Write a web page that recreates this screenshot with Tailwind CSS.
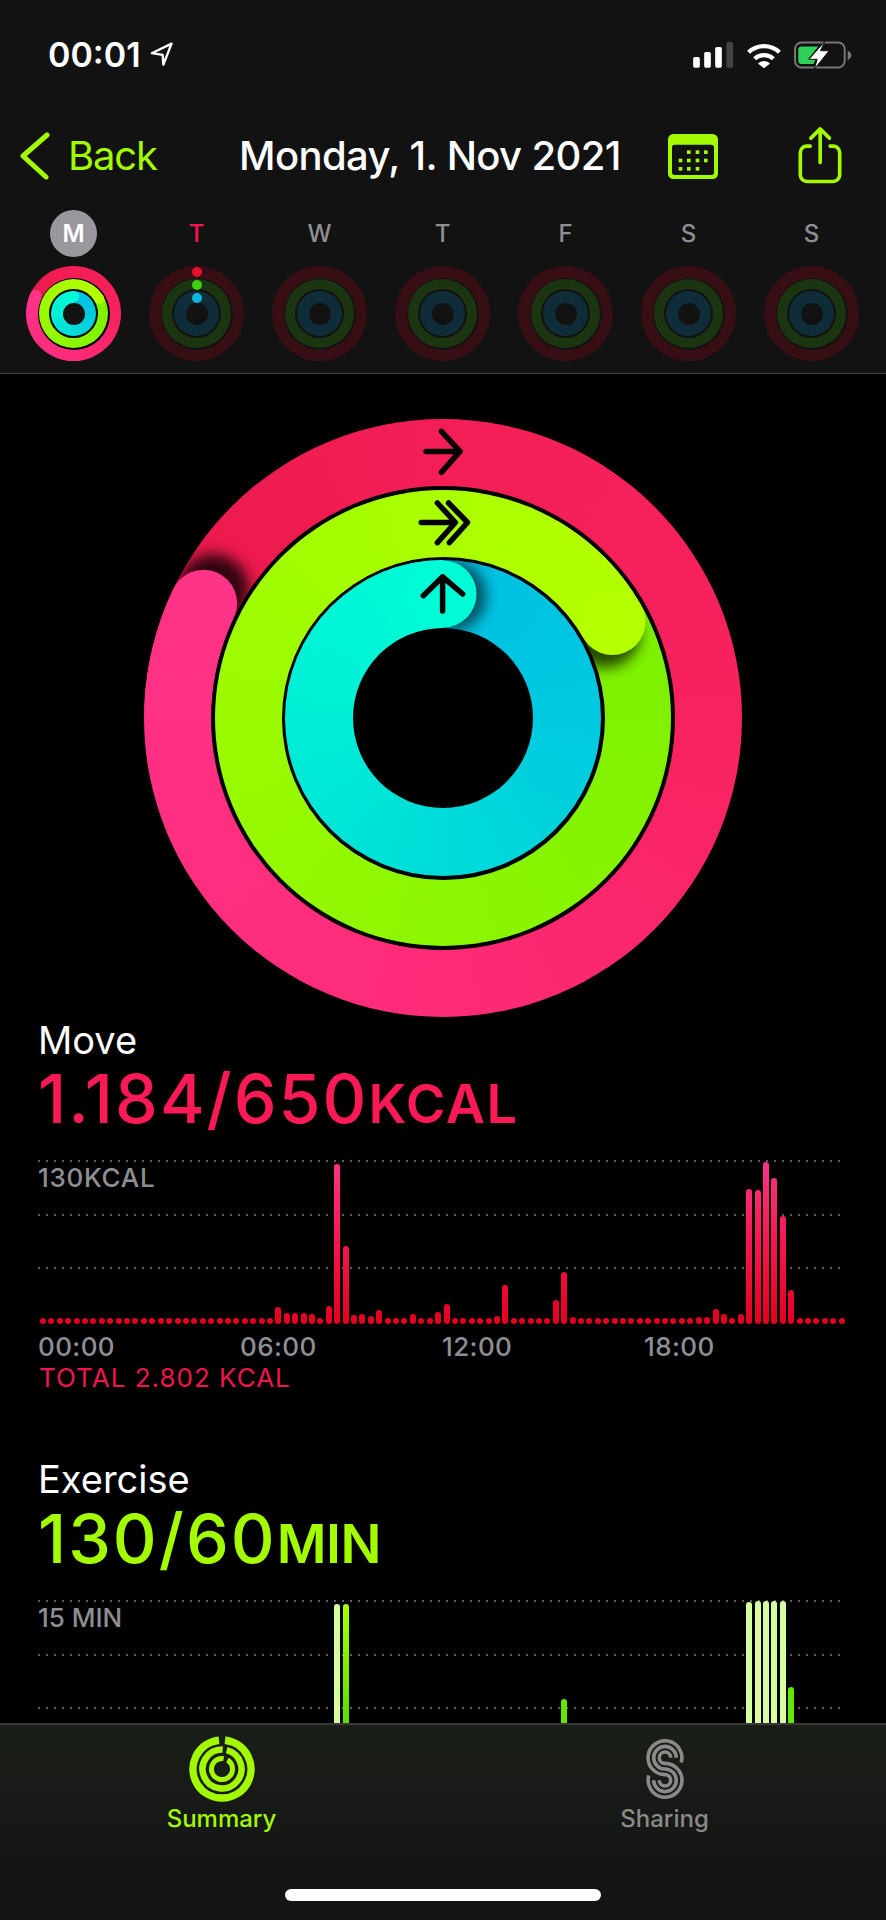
<!DOCTYPE html>
<html lang="en">
<head>
  <meta charset="UTF-8" />
  <meta name="viewport" content="width=device-width, initial-scale=1.0"/>
  <title>Activity Summary</title>
  <script src="https://cdn.jsdelivr.net/npm/@tailwindcss/browser@4"></script>
</head>
<body class="bg-black text-white font-['Inter',sans-serif]">
  <div class="w-[886px] h-[1920px] overflow-hidden flex flex-col">

    <!-- Header -->
    <header class="h-[374px] shrink-0 bg-[#121212] border-b border-[#444444] pt-[35px]">
      <!-- Status bar -->
      <div class="h-[40px] flex items-center pl-[48px]">
        <span class="text-[34px] leading-[40px] font-semibold">00:01</span>
        <svg class="ml-[8px] mb-[3px]" width="26" height="28" viewBox="450 120 78 85" fill="none" stroke="#fff" stroke-width="7" stroke-linejoin="round"><path d="M518 131 458 160 491 165 493 195z"/></svg>
        <div class="ml-auto flex items-center mr-[34px]">
          <svg width="41" height="26" viewBox="755 125 122 78" fill="#fff"><rect x="755" y="170" width="20" height="32" rx="5"/><rect x="788" y="155" width="20" height="47" rx="5"/><rect x="821" y="140" width="20" height="62" rx="5"/><rect x="855" y="125" width="20" height="77" rx="5" fill="#444"/></svg>
          <svg class="ml-[12px]" width="36" height="27" viewBox="910 120 110 84" fill="none" stroke="#fff" stroke-width="13"><path d="M917 152a70 70 0 0 1 96 0M936 172a43 43 0 0 1 58 0"/><path d="M946 187a27 27 0 0 1 38 0l-19 15z" fill="#fff" stroke="none"/></svg>
          <svg class="ml-[12px]" width="58" height="30" viewBox="1055 118 175 90"><rect x="1058" y="125" width="150" height="76" rx="20" fill="none" stroke="#777" stroke-width="6"/><path d="M1217 150c6 2 11 7 11 14s-5 12-11 14z" fill="#777"/><path d="M1068 147a10 10 0 0 1 10-10h50l-30 38h22l-6 15h-36a10 10 0 0 1-10-10z" fill="#30d158"/><path d="M1148 122 1100 176h25l-9 30 45-56h-26z" fill="#fff" stroke="#121212" stroke-width="3"/></svg>
        </div>
      </div>

      <!-- Nav bar -->
      <nav class="flex items-center h-[48px] mt-[57px]">
        <div class="w-[239px] flex items-center pl-[20px]">
          <svg width="30" height="48" viewBox="0 0 30 48" fill="none" stroke="#a2f900" stroke-width="5" stroke-linecap="round" stroke-linejoin="round"><path d="M27 3 3 24 26 45"/></svg>
          <span class="ml-[18px] text-[40px] leading-[48px] tracking-[-1.2px] text-[#a2f900]">Back</span>
        </div>
        <h1 class="w-[429px] text-[40px] leading-[48px] font-medium tracking-[-0.6px]">Monday, 1. Nov 2021</h1>
        <div class="w-[131px]">
          <svg width="50" height="45" viewBox="675 400 150 135"><rect x="675" y="400" width="150" height="135" rx="16" fill="#a2f900"/><rect x="687" y="432" width="126" height="91" rx="8" fill="#121212"/><g fill="#a2f900"><rect x="732" y="449" width="11" height="11"/><rect x="758" y="449" width="11" height="11"/><rect x="783" y="449" width="11" height="11"/><rect x="707" y="474" width="11" height="11"/><rect x="732" y="474" width="11" height="11"/><rect x="758" y="474" width="11" height="11"/><rect x="783" y="474" width="11" height="11"/><rect x="707" y="499" width="11" height="11"/><rect x="732" y="499" width="11" height="11"/><rect x="758" y="499" width="11" height="11"/></g></svg>
        </div>
        <svg class="-ml-[3px]" width="48" height="60" viewBox="1060 375 145 180" fill="none" stroke="#a2f900" stroke-width="11" stroke-linecap="round" stroke-linejoin="round"><path d="M1103 435H1093a20 20 0 0 0-20 20V522a20 20 0 0 0 20 20H1172a20 20 0 0 0 20-20V455a20 20 0 0 0-20-20H1163"/><path d="M1133 485V385M1105 411 1133 383 1161 411"/></svg>
      </nav>

      <!-- Week row -->
      <div id="week" class="grid grid-cols-7 w-[861px] ml-[12px] mt-[30px]"></div>
    </header>

    <!-- Scrolling content -->
    <main class="flex-1 overflow-hidden bg-black pt-[44px]">
      <!-- Activity rings -->
      <div class="relative w-[600px] h-[599px] mx-auto">
        <div class="absolute left-[1px] top-[1px] w-[598px] h-[598px] rounded-full flex items-center justify-center bg-[conic-gradient(from_295.6deg,#ea194b,#f41e56_64deg,#f7225f_154deg,#fd2b78_244deg,#ff3085_334deg,#ff3388)]">
          <div class="w-[464px] h-[464px] rounded-full bg-black flex items-center justify-center">
            <div class="w-[456px] h-[456px] rounded-full flex items-center justify-center bg-[conic-gradient(from_60.4deg,#7cf000,#8cf600_120deg,#a0fc00_240deg,#b4ff00)]">
              <div class="w-[323px] h-[323px] rounded-full bg-black flex items-center justify-center">
                <div class="w-[316px] h-[316px] rounded-full flex items-center justify-center bg-[conic-gradient(#00bfe2,#00c9e0_90deg,#00dcd9_180deg,#00efd6_270deg,#00fcd6)]">
                  <div class="w-[180px] h-[180px] rounded-full bg-black"></div>
                </div>
              </div>
            </div>
          </div>
        </div>
        <svg class="absolute inset-0" width="600" height="600" viewBox="0 0 600 600" fill="none">
          <defs>
            <filter id="soft" x="-50%" y="-50%" width="200%" height="200%"><feGaussianBlur stdDeviation="7"/></filter>
            <clipPath id="clip-red"><path clip-rule="evenodd" d="M1 300a299 299 0 1 0 598 0a299 299 0 1 0-598 0zM68 300a232 232 0 1 0 464 0a232 232 0 1 0-464 0z"/></clipPath>
            <clipPath id="clip-green"><path clip-rule="evenodd" d="M72 300a228 228 0 1 0 456 0a228 228 0 1 0-456 0zM138.500 300a161.500 161.500 0 1 0 323 0a161.500 161.500 0 1 0-323 0z"/></clipPath>
            <clipPath id="clip-blue"><path clip-rule="evenodd" d="M142 300a158 158 0 1 0 316 0a158 158 0 1 0-316 0zM210 300a90 90 0 1 0 180 0a90 90 0 1 0-180 0z"/></clipPath>
          </defs>
          <!-- ring heads with their shadows -->
          <g clip-path="url(#clip-red)">
            <circle cx="70" cy="172" r="36" fill="#000" opacity=".8" filter="url(#soft)"/>
            <path d="M34.500 300A265.500 265.500 0 0 1 60.600 185.300" stroke="#ff3286" stroke-width="67"/>
            <circle cx="60.600" cy="185.300" r="33.500" fill="#ff3388"/>
          </g>
          <g clip-path="url(#clip-green)">
            <circle cx="462" cy="215" r="35" fill="#000" opacity=".7" filter="url(#soft)"/>
            <path d="M397.400 131.300A194.750 194.750 0 0 1 469.300 203.800" stroke="#b2ff00" stroke-width="66.500"/>
            <circle cx="469.300" cy="203.800" r="33.250" fill="#b4ff00"/>
          </g>
          <g clip-path="url(#clip-blue)">
            <circle cx="308" cy="178" r="35" fill="#000" opacity=".6" filter="url(#soft)"/>
            <path d="M238 192.600A124 124 0 0 1 300 176" stroke="#00fad6" stroke-width="68"/>
            <circle cx="300" cy="176" r="33.500" fill="#00fcd6"/>
          </g>
          <!-- arrows -->
          <g stroke="#000" stroke-width="5.500" stroke-linecap="round" stroke-linejoin="round" transform="translate(-143 -418)">
            <path d="M426 451.400H460M441.400 431.300 460 451.400 441.400 472.300"/>
            <path d="M421.300 522.500H451M437.400 503 455.400 522.500 437.400 542.600M448.600 503 467.500 522.500 449.400 542.600"/>
            <path d="M423.300 595.700 442.600 576.800 462.700 594M442.600 576.800V611"/>
          </g>
        </svg>
      </div>

      <!-- Move -->
      <section>
        <h2 class="ml-[38px] text-[38px] leading-[46px]">Move</h2>
        <p class="ml-[38px] mt-[1px] text-[68px] leading-[68px] font-medium tracking-[2px] text-[#fb1a55] whitespace-nowrap">1.184/650<span class="text-[54px] font-semibold tracking-[1.5px]">KCAL</span></p>
        <div class="relative w-[808px] h-[164px] mt-[22px] ml-[38px]">
          <div class="absolute left-0 top-0 w-[805px] h-[2px] bg-[repeating-linear-gradient(90deg,#5e5e5e_0_2px,transparent_2px_8px)]"></div>
          <div class="absolute left-0 top-[54px] w-[805px] h-[2px] bg-[repeating-linear-gradient(90deg,#5e5e5e_0_2px,transparent_2px_8px)]"></div>
          <div class="absolute left-0 top-[107px] w-[805px] h-[2px] bg-[repeating-linear-gradient(90deg,#5e5e5e_0_2px,transparent_2px_8px)]"></div>
          <span class="absolute left-0 top-[3px] text-[26px] leading-[30px] font-medium tracking-[0.7px] text-[#8e8e93]">130KCAL</span>
          <div id="move-bars" class="relative h-[164px] w-[806px] ml-[2px] flex justify-between items-end"></div>
        </div>
        <div class="grid grid-cols-4 w-[808px] ml-[38px] mt-[8px] text-[26px] leading-[30px] font-medium tracking-[0.4px] text-[#8e8e93]">
          <span>00:00</span><span>06:00</span><span>12:00</span><span>18:00</span>
        </div>
        <p class="ml-[39px] text-[26px] leading-[32px] tracking-[1px] text-[#f0154c]">TOTAL 2.802 KCAL</p>
      </section>

      <!-- Exercise -->
      <section class="mt-[62px]">
        <h2 class="ml-[38px] text-[38px] leading-[46px]">Exercise</h2>
        <p class="ml-[38px] mt-[2px] text-[68px] leading-[68px] font-medium tracking-[2px] text-[#a4fb00] whitespace-nowrap">130/60<span class="text-[54px] font-semibold tracking-[-0.5px]">MIN</span></p>
        <div class="relative w-[808px] h-[164px] mt-[22px] ml-[38px]">
          <div class="absolute left-0 top-0 w-[805px] h-[2px] bg-[repeating-linear-gradient(90deg,#5e5e5e_0_2px,transparent_2px_8px)]"></div>
          <div class="absolute left-0 top-[54px] w-[805px] h-[2px] bg-[repeating-linear-gradient(90deg,#5e5e5e_0_2px,transparent_2px_8px)]"></div>
          <div class="absolute left-0 top-[107px] w-[805px] h-[2px] bg-[repeating-linear-gradient(90deg,#5e5e5e_0_2px,transparent_2px_8px)]"></div>
          <span class="absolute left-0 top-[3px] text-[26px] leading-[30px] font-medium text-[#8e8e93]">15 MIN</span>
          <div id="exercise-bars" class="relative h-[164px] w-[806px] ml-[2px] flex justify-between items-end"></div>
        </div>
      </section>
    </main>

    <!-- Tab bar -->
    <footer class="h-[197px] shrink-0 border-t-2 border-[#3a3b38] bg-[linear-gradient(#1a1e18,#131313)] flex flex-col">
      <div class="grid grid-cols-2 pt-[10px]">
        <div class="flex flex-col items-center">
          <div class="h-[67px] flex items-center">
            <svg width="68" height="68" viewBox="0 0 68 68" fill="none" stroke="#a2f900">
              <path d="M37 5.200A29 29 0 1 1 31 5.200" stroke-width="7.500"/>
              <path d="M36 14.600A19.500 19.500 0 1 1 32 14.600" stroke-width="6.500" transform="rotate(8 34 34)"/>
              <path d="M36 23.700A10.500 10.500 0 1 1 32 23.700" stroke-width="5" transform="rotate(20 34 34)"/>
            </svg>
          </div>
          <span class="mt-[3px] text-[24px] leading-[28px] font-medium text-[#a2f900]">Summary</span>
        </div>
        <div class="flex flex-col items-center">
          <div class="h-[67px] flex items-center">
            <svg width="40" height="62" viewBox="0 0 40 62" fill="none" stroke="#8a8a88" stroke-width="3.600">
              <path d="M36.200 24.400A16.900 16.900 0 1 0 20 36.600A5.700 5.700 0 1 1 14.300 42.300"/>
              <path d="M31.300 19.700A11.300 11.300 0 1 0 20 31A11.300 11.300 0 1 1 8.700 42.300"/>
              <path d="M25.700 19.700A5.700 5.700 0 1 0 20 25.400A16.900 16.900 0 1 1 3.800 37.600"/>
            </svg>
          </div>
          <span class="mt-[3px] text-[24px] leading-[28px] font-medium text-[#8a8a8a]">Sharing</span>
        </div>
      </div>
      <div class="w-[316px] h-[12px] mx-auto mt-auto mb-[19px] rounded-full bg-white"></div>
    </footer>
  </div>

  <script>
    // day letters + small rings
    const days = ['M', 'T', 'W', 'T', 'F', 'S', 'S'];
    const emptyRing = `
      <div class="w-[95px] h-[95px] rounded-full bg-[#360e13] flex items-center justify-center">
        <div class="w-[72px] h-[72px] rounded-full bg-[#121212] flex items-center justify-center">
          <div class="w-[69px] h-[69px] rounded-full bg-[#1c3511] flex items-center justify-center">
            <div class="w-[49px] h-[49px] rounded-full bg-[#121212] flex items-center justify-center">
              <div class="w-[45px] h-[45px] rounded-full bg-[#0f2d38] flex items-center justify-center">
                <div class="w-[22px] h-[22px] rounded-full bg-[#121212]"></div>
              </div>
            </div>
          </div>
        </div>
      </div>`;
    const activeRing = `
      <div class="relative w-[95px] h-[95px] rounded-full flex items-center justify-center bg-[conic-gradient(from_295.6deg,#ea194b,#f41e56_64deg,#f7225f_154deg,#fd2b78_244deg,#ff3085_334deg,#ff3388)]">
        <div class="w-[72px] h-[72px] rounded-full bg-black flex items-center justify-center">
          <div class="w-[69px] h-[69px] rounded-full flex items-center justify-center bg-[conic-gradient(from_60.4deg,#7cf000,#8cf600_120deg,#a0fc00_240deg,#b4ff00)]">
            <div class="w-[49px] h-[49px] rounded-full bg-black flex items-center justify-center">
              <div class="w-[45px] h-[45px] rounded-full flex items-center justify-center bg-[conic-gradient(#00bfe2,#00c9e0_90deg,#00dcd9_180deg,#00efd6_270deg,#00fcd6)]">
                <div class="w-[22px] h-[22px] rounded-full bg-[#121212]"></div>
              </div>
            </div>
          </div>
        </div>
        <svg class="absolute inset-0" width="95" height="95" viewBox="0 0 95 95">
          <circle cx="9.900" cy="29.500" r="5.750" fill="#ff3388"/>
          <circle cx="73.200" cy="32.900" r="5" fill="#b4ff00"/>
          <circle cx="47.500" cy="30.500" r="5.600" fill="#00fcd6"/>
        </svg>
      </div>`;
    const dots = `
      <div class="absolute left-[42.500px] top-[0.500px] flex flex-col gap-[3px]">
        <div class="w-[10px] h-[10px] rounded-full bg-[#e8102a]"></div>
        <div class="w-[10px] h-[10px] rounded-full bg-[#3fd010]"></div>
        <div class="w-[10px] h-[10px] rounded-full bg-[#10b5e0]"></div>
      </div>`;

    document.getElementById('week').innerHTML = days.map((d, i) => {
      let letter = `<span class="h-[47px] flex items-center text-[24px] font-medium text-[#8e8e93]">${d}</span>`;
      if (i === 0) letter = `<span class="w-[47px] h-[47px] rounded-full bg-[#98989e] flex items-center justify-center text-[24px] font-semibold text-white">${d}</span>`;
      if (i === 1) letter = `<span class="h-[47px] flex items-center text-[24px] font-medium text-[#f5164f]">${d}</span>`;
      return `<div class="flex flex-col items-center gap-[9px]">${letter}<div class="relative">${i === 0 ? activeRing : emptyRing}${i === 1 ? dots : ''}</div></div>`;
    }).join('');

    // 96 quarter-hour bars
    const moveHeights = Array(96).fill(6);
    const moveData = {28:17,29:11,30:11,31:11,32:10,34:18,35:160,36:78,37:9,38:10,39:8,40:14,44:10,47:12,48:20,54:8,55:39,61:24,62:52,63:7,78:7,79:7,80:15,81:10,83:10,84:135,85:134,86:162,87:146,88:108,89:34};
    Object.keys(moveData).forEach(i => { moveHeights[i] = moveData[i]; });
    document.getElementById('move-bars').innerHTML = moveHeights.map(h =>
      `<div class="w-[6px] rounded-full bg-no-repeat bg-bottom bg-size-[100%_162px] bg-[linear-gradient(to_top,#e4001c,#f5164f_50%,#ff3388)]" style="height:${h}px"></div>`
    ).join('');

    const pale = 'bg-[#d6ffa0]';
    const deep = 'bg-[#62e800]';
    const exerciseData = {
      35: [160, pale],
      36: [160, 'bg-[linear-gradient(#aaff00,#5ee000_70%)]'],
      62: [65, deep],
      84: [162, pale], 85: [163, pale], 86: [163, pale], 87: [163, pale], 88: [163, pale],
      89: [77, deep]
    };
    let exerciseHtml = '';
    for (let i = 0; i < 96; i++) {
      const bar = exerciseData[i];
      exerciseHtml += bar
        ? `<div class="w-[6px] rounded-t-full ${bar[1]}" style="height:${bar[0]}px"></div>`
        : '<div class="w-[6px]"></div>';
    }
    document.getElementById('exercise-bars').innerHTML = exerciseHtml;
  </script>
</body>
</html>
